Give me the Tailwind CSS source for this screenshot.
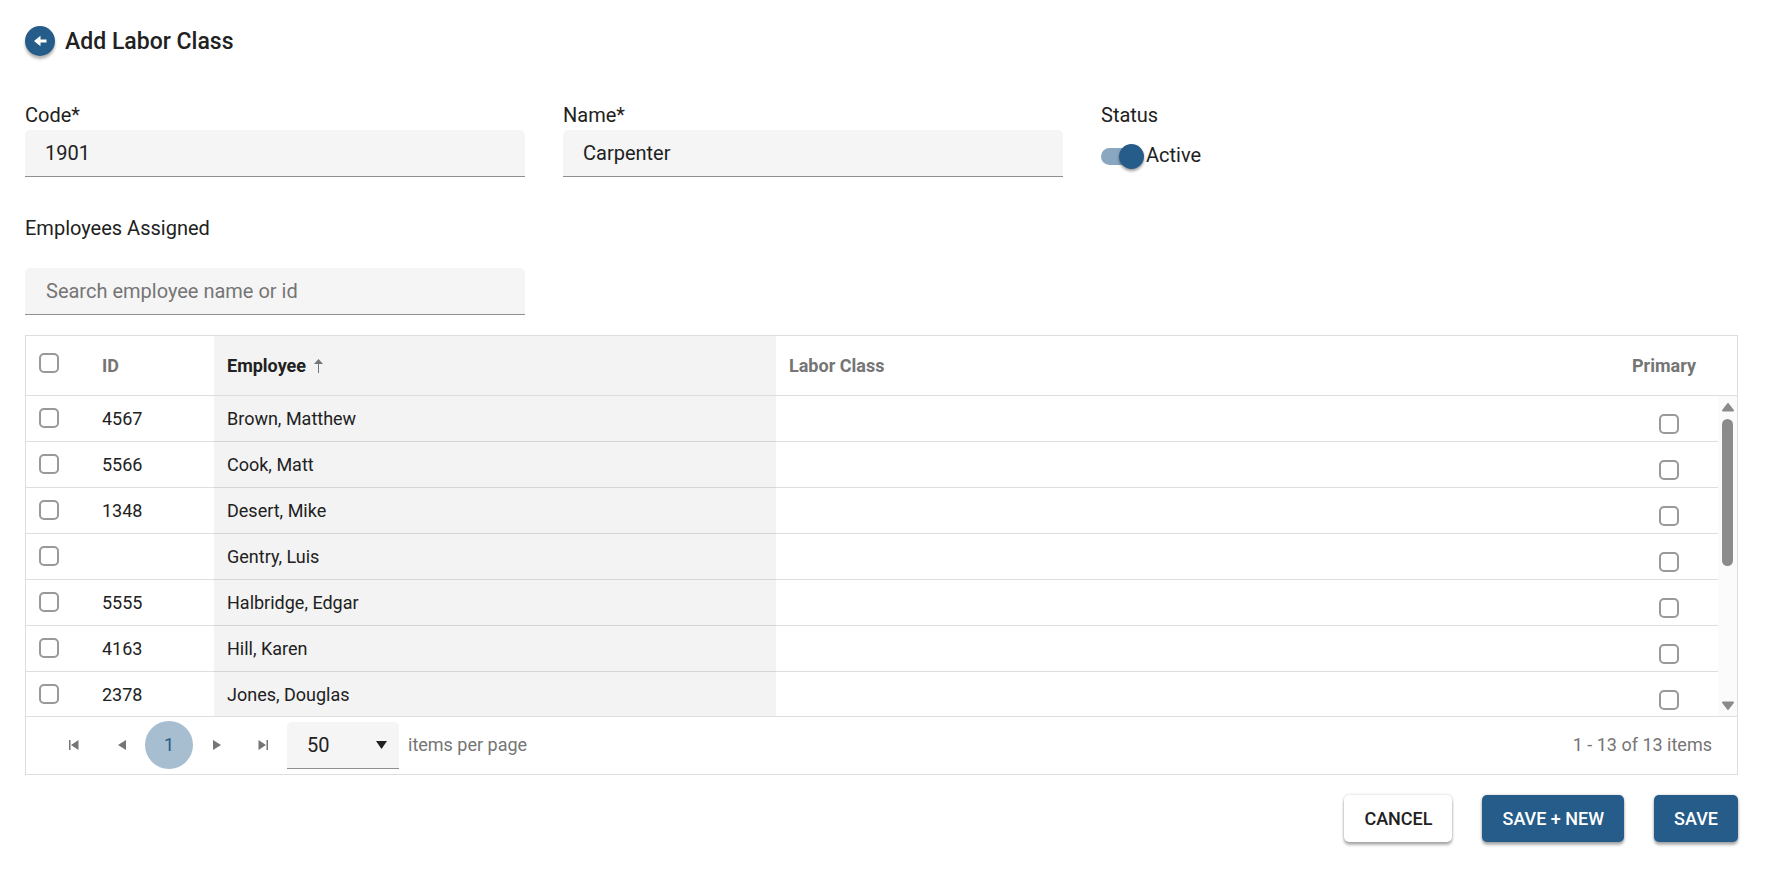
<!DOCTYPE html>
<html lang="en">

<head>
    <meta charset="UTF-8">
    <meta name="viewport" content="width=device-width, initial-scale=1.0">
    <title>Add Labor Class</title>
    <script src="https://cdn.jsdelivr.net/npm/@tailwindcss/browser@4"></script>
    <style>
        body {
            font-family: Roboto, "Liberation Sans", sans-serif;
        }
    </style>
</head>

<body class="bg-white text-[#212121] text-xl leading-6">
    <main class="pl-[25px] pr-[27px] pt-[26px] pb-7">
        <header class="flex items-center gap-[10px]">
            <button type="button" aria-label="Back"
                class="flex size-[30px] items-center justify-center rounded-full bg-[#255c89] shadow-[0_3px_3px_rgba(0,0,0,0.3)]">
                <svg class="h-3 w-[14px]" viewBox="0 0 14 12" fill="#fff">
                    <path d="M1 6 7.500 .800V4.500H13.500v3H7.500V11.200z" />
                </svg>
            </button>
            <h1 class="pt-[2px] text-[23px] leading-7 font-medium">Add Labor Class</h1>
        </header>

        <form class="mt-[47px] grid grid-cols-[minmax(0,500px)_minmax(0,500px)_1fr] gap-x-[38px]">
            <div>
                <label for="code" class="block">Code*</label>
                <input id="code" type="text" value="1901"
                    class="mt-[3px] block h-[47px] w-full rounded-t-[5px] border-b border-[#8f8f8f] bg-[#f5f5f5] px-5 focus:outline-none">
            </div>
            <div>
                <label for="name" class="block">Name*</label>
                <input id="name" type="text" value="Carpenter"
                    class="mt-[3px] block h-[47px] w-full rounded-t-[5px] border-b border-[#8f8f8f] bg-[#f5f5f5] px-5 focus:outline-none">
            </div>
            <div>
                <span class="block">Status</span>
                <label for="status" class="mt-4 flex items-center gap-[2px]">
                    <span class="relative flex h-[26px] w-[43px] items-center">
                        <input id="status" type="checkbox" checked
                            class="peer h-[17px] w-[38px] appearance-none rounded-full bg-[#bdbdbd] checked:bg-[#8aa7c1]">
                        <span class="absolute left-0 size-[25px] rounded-full bg-white shadow-[0_2px_3px_rgba(0,0,0,0.4)] peer-checked:left-[18px] peer-checked:bg-[#255c89]"></span>
                    </span>
                    <span class="pb-[2px]">Active</span>
                </label>
            </div>
        </form>

        <h2 class="mt-[39px]"><label for="search">Employees Assigned</label></h2>
        <input id="search" type="text" placeholder="Search employee name or id"
            class="mt-7 block h-[47px] w-full max-w-[500px] rounded-t-[5px] border-b border-[#8f8f8f] bg-[#f5f5f5] px-[21px] placeholder:text-[#757575] focus:outline-none">

        <section class="mt-5 border border-[#dedede] text-lg leading-6">
            <div class="border-b border-[#dedede] pr-[19px]">
                <table class="w-full table-fixed text-left">
                    <thead>
                        <tr class="h-[59px] text-[#757575]">
                            <th class="w-[63px] pb-[6px] pl-[13px]">
                                <input type="checkbox" aria-label="Select all"
                                    class="block size-5 appearance-none rounded-[5px] border-2 border-[#999] bg-white checked:bg-[#255c89]">
                            </th>
                            <th class="w-[125px] pl-[13px]">ID</th>
                            <th class="w-[562px] bg-[#f3f3f3] pl-[13px] text-[#212121]">
                                <span class="flex items-center gap-2">Employee
                                    <svg class="h-[14px] w-[9px]" viewBox="0 0 9 14" fill="#757575">
                                        <path d="M4.500 0 9 5H5v9H4V5H0z" />
                                    </svg>
                                </span>
                            </th>
                            <th class="pl-[13px]">Labor Class</th>
                            <th class="w-[100px] pl-[14px]">Primary</th>
                        </tr>
                    </thead>
                </table>
            </div>

            <div class="flex h-80 overflow-hidden">
                <table class="w-full table-fixed border-separate border-spacing-0 self-start">
                    <colgroup>
                        <col class="w-[63px]">
                        <col class="w-[125px]">
                        <col class="w-[562px]">
                        <col>
                        <col class="w-[100px]">
                    </colgroup>
                    <tbody id="rows"></tbody>
                </table>
                <!-- scroll track -->
                <div class="flex w-[19px] shrink-0 flex-col items-center bg-[#fbfbfb] pt-[6px] pb-[5px]">
                    <svg class="h-[10px] w-3" viewBox="0 0 12 10" fill="#8b8b8b" stroke="#8b8b8b" stroke-width="2" stroke-linejoin="round">
                        <path d="M6 2 11 8.500H1z" />
                    </svg>
                    <div class="mt-[7px] h-[147px] w-[11px] rounded-full bg-[#8b8b8b]"></div>
                    <svg class="mt-auto h-[10px] w-3" viewBox="0 0 12 10" fill="#8b8b8b" stroke="#8b8b8b" stroke-width="2" stroke-linejoin="round">
                        <path d="M1 1.500H11L6 8z" />
                    </svg>
                </div>
            </div>

            <nav class="flex h-[58px] items-center border-t border-[#dedede] pb-px pl-6 pr-[25px] text-[#757575]">
                <button type="button" aria-label="First page" class="flex h-12 w-[48px] items-center justify-center">
                    <svg class="h-[10px] w-[10px]" viewBox="0 0 10 10" fill="#757575">
                        <path d="M0 0h1.500v10H0zM9.500 0v10L2 5z" />
                    </svg>
                </button>
                <button type="button" aria-label="Previous page" class="flex h-12 w-[47px] items-center justify-center">
                    <svg class="h-[10px] w-2" viewBox="0 0 8 10" fill="#757575">
                        <path d="M8 0v10L0 5z" />
                    </svg>
                </button>
                <button type="button" class="size-12 rounded-full bg-[#a7bdd0] text-[#255c89]">1</button>
                <button type="button" aria-label="Next page" class="flex h-12 w-[47px] items-center justify-center">
                    <svg class="h-[10px] w-2" viewBox="0 0 8 10" fill="#757575">
                        <path d="M0 0v10l8-5z" />
                    </svg>
                </button>
                <button type="button" aria-label="Last page" class="flex h-12 w-[45px] items-center justify-center">
                    <svg class="h-[10px] w-[10px]" viewBox="0 0 10 10" fill="#757575">
                        <path d="M8.500 0H10v10H8.500zM.500 0v10L8 5z" />
                    </svg>
                </button>
                <span class="relative ml-[2px] flex items-center">
                    <select id="pageSize"
                        class="h-[47px] w-28 appearance-none rounded-t-[5px] border-b border-[#8f8f8f] bg-[#f5f5f5] px-5 text-xl text-[#212121] focus:outline-none">
                        <option>20</option>
                        <option selected>50</option>
                        <option>100</option>
                    </select>
                    <svg class="pointer-events-none absolute right-3 h-2 w-[11px]" viewBox="0 0 11 8" fill="#212121">
                        <path d="M0 0h11L5.500 8z" />
                    </svg>
                </span>
                <label for="pageSize" class="ml-[9px]">items per page</label>
                <span class="ml-auto">1 - 13 of 13 items</span>
            </nav>
        </section>

        <div class="mt-5 flex justify-end gap-[30px] text-lg leading-6 font-medium">
            <button type="button" class="h-[47px] rounded-[5px] px-5 shadow-[0_3px_3px_rgba(0,0,0,0.3),0_0_3px_rgba(0,0,0,0.2)]">CANCEL</button>
            <button type="button" class="h-[47px] rounded-[5px] bg-[#255c89] px-5 text-white shadow-[0_3px_3px_rgba(0,0,0,0.3),0_0_3px_rgba(0,0,0,0.2)]">SAVE + NEW</button>
            <button type="button" class="h-[47px] rounded-[5px] bg-[#255c89] px-5 text-white shadow-[0_3px_3px_rgba(0,0,0,0.3),0_0_3px_rgba(0,0,0,0.2)]">SAVE</button>
        </div>
    </main>

    <script>
        const employees = [
            { id: '4567', name: 'Brown, Matthew' },
            { id: '5566', name: 'Cook, Matt' },
            { id: '1348', name: 'Desert, Mike' },
            { id: '', name: 'Gentry, Luis' },
            { id: '5555', name: 'Halbridge, Edgar' },
            { id: '4163', name: 'Hill, Karen' },
            { id: '2378', name: 'Jones, Douglas' }
        ];

        document.getElementById('rows').innerHTML = employees.map(e => `
            <tr class="h-[46px]">
                <td class="border-b border-[#dedede] pb-px pl-[13px]">
                    <input type="checkbox" aria-label="Select ${e.name}"
                        class="block size-5 appearance-none rounded-[5px] border-2 border-[#999] bg-white checked:bg-[#255c89]">
                </td>
                <td class="border-b border-[#dedede] pt-px pl-[13px]">${e.id}</td>
                <td class="border-b border-[#d6d6d6] bg-[#f3f3f3] pt-px pl-[13px]">${e.name}</td>
                <td class="border-b border-[#dedede]"></td>
                <td class="border-b border-[#dedede] pt-[11px] pl-[2px]">
                    <input type="checkbox" aria-label="Primary for ${e.name}"
                        class="mx-auto block size-5 appearance-none rounded-[5px] border-2 border-[#999] bg-white checked:bg-[#255c89]">
                </td>
            </tr>
        `).join('');
    </script>
</body>

</html>
